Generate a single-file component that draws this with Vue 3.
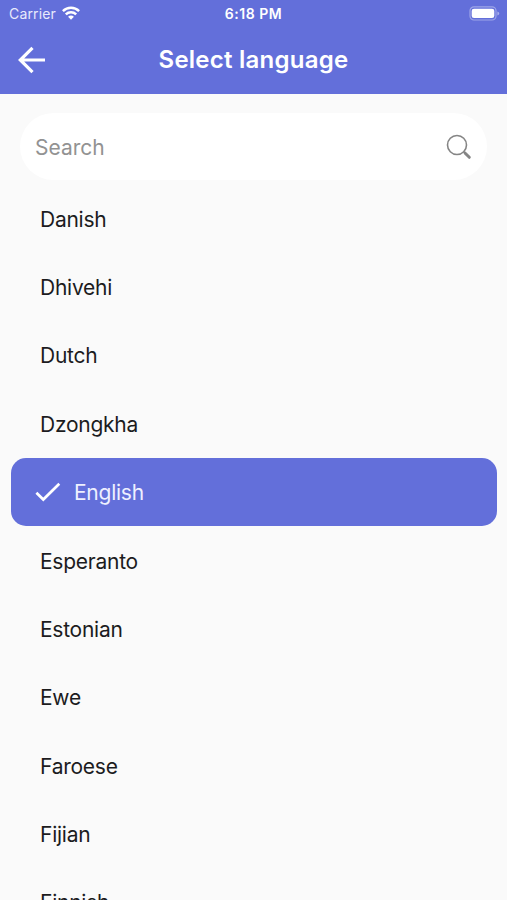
<script setup>
import { ref } from 'vue'

const languages = ['Danish', 'Dhivehi', 'Dutch', 'Dzongkha', 'English', 'Esperanto', 'Estonian', 'Ewe', 'Faroese', 'Fijian', 'Finnish']
const selected = ref('English')
const query = ref('')
</script>

<template>
  <main class="screen">
    <header class="header">
      <div class="status">
        <div class="carrier">
          <span>Carrier</span>
          <svg class="wifi" viewBox="0 0 18 14" fill="none" stroke="#fff" stroke-width="2.5">
            <path d="M.9 5.1C5.5 .7 12.5 .7 17.1 5.1" />
            <path d="M3.8 8.4C6.8 5.6 11.2 5.6 14.2 8.4" />
            <path d="M6.1 10.8C7.8 9.2 10.2 9.2 11.9 10.8L9 13.7Z" fill="#fff" stroke="none" />
          </svg>
        </div>
        <span class="time">6:18 PM</span>
        <svg class="battery" viewBox="0 0 31 15">
          <rect x="1" y=".8" width="26" height="13.2" rx="4" fill="none" stroke="#fff" stroke-opacity=".38" stroke-width="1.2" />
          <rect x="2.7" y="2.7" width="22.6" height="9.4" rx="2.3" fill="#fff" />
          <path d="M28.4 5.4Q30.2 6 30.2 7.4T28.4 9.4Z" fill="#fff" fill-opacity=".45" />
        </svg>
      </div>
      <div class="bar">
        <button class="back" aria-label="Back">
          <svg viewBox="0 0 28 28" fill="none" stroke="#fff" stroke-width="3.2">
            <path d="M27 14H3M14.5 1.8L2.3 14L14.5 26.2" />
          </svg>
        </button>
        <h1 class="title">Select language</h1>
      </div>
    </header>

    <label class="search">
      <input v-model="query" class="field" type="text" placeholder="Search">
      <svg class="glass" viewBox="0 0 26 26" fill="none" stroke="#858585">
        <circle cx="11" cy="11" r="9.5" stroke-width="1.6" />
        <path d="M17.8 17.8L19.5 19.5" stroke-width="1.8" />
        <path d="M19.2 19.2L23.3 23.3" stroke-width="3" stroke-linecap="round" />
      </svg>
    </label>

    <ul class="list">
      <li v-for="name in languages" :key="name" class="row" :class="{ active: name === selected }" @click="selected = name">
        <svg v-if="name === selected" class="check" viewBox="0 0 26 20" fill="none" stroke="#fff" stroke-width="2.7">
          <path d="M1.4 10.7L8.3 17.5L24.3 1.7" />
        </svg>
        <span class="name">{{ name }}</span>
      </li>
    </ul>
  </main>
</template>

<style>
body {
  margin: 0;
  background: #fafafa;
}
</style>

<style scoped>
.screen {
  height: 900px;
  overflow: hidden;
  display: flex;
  flex-direction: column;
  background: #fafafa;
  color: #1c1c1e;
  font-family: Inter, "Liberation Sans", sans-serif;
}
.header {
  flex: none;
  height: 93.5px;
  background: #636fda;
  color: #fff;
}
.status {
  height: 27px;
  padding: 0 7px 0 9px;
  display: grid;
  grid-template-columns: 1fr auto 1fr;
  align-items: center;
  font-size: 14px;
}
.carrier {
  display: flex;
  align-items: center;
  gap: 6px;
  color: #e8eafc;
  letter-spacing: .15px;
}
.wifi {
  width: 18px;
  height: 14px;
  margin-bottom: 2px;
}
.time {
  font-weight: 600;
  font-size: 14px;
  letter-spacing: .5px;
  margin-right: 2px;
}
.battery {
  width: 31px;
  height: 15px;
  justify-self: end;
}
.bar {
  height: 66px;
  padding: 0 18px;
  display: grid;
  grid-template-columns: 28px 1fr 28px;
  align-items: center;
}
.back {
  padding: 0;
  border: 0;
  background: none;
  height: 28px;
}
.back svg {
  display: block;
  width: 28px;
  height: 28px;
}
.title {
  margin: 0;
  text-align: center;
  font-size: 24px;
  line-height: 28px;
  font-weight: 600;
  letter-spacing: .25px;
}
.search {
  flex: none;
  height: 67px;
  margin: 19.5px 20px 4.4px;
  padding: 0 15px;
  box-sizing: border-box;
  display: flex;
  align-items: center;
  justify-content: space-between;
  border-radius: 34px;
  background: #fff;
}
.field {
  flex: 1;
  min-width: 0;
  padding: 2px 0 0;
  border: 0;
  outline: 0;
  background: none;
  font: inherit;
  font-size: 21px;
  letter-spacing: 0;
}
.field::placeholder {
  color: #929292;
  opacity: 1;
}
.glass {
  width: 26px;
  height: 26px;
}
.list {
  margin: 0;
  padding: 0 10px 0 11px;
  list-style: none;
}
.row {
  height: 68.4px;
  padding-left: 29px;
  box-sizing: border-box;
  display: flex;
  align-items: center;
  font-size: 21px;
  letter-spacing: -.25px;
}
.name {
  padding-top: 1px;
}
.active {
  padding-left: 24px;
  gap: 13px;
  border-radius: 15px;
  background: #636fda;
  color: #eef0ff;
}
.check {
  width: 26px;
  height: 20px;
}
</style>
